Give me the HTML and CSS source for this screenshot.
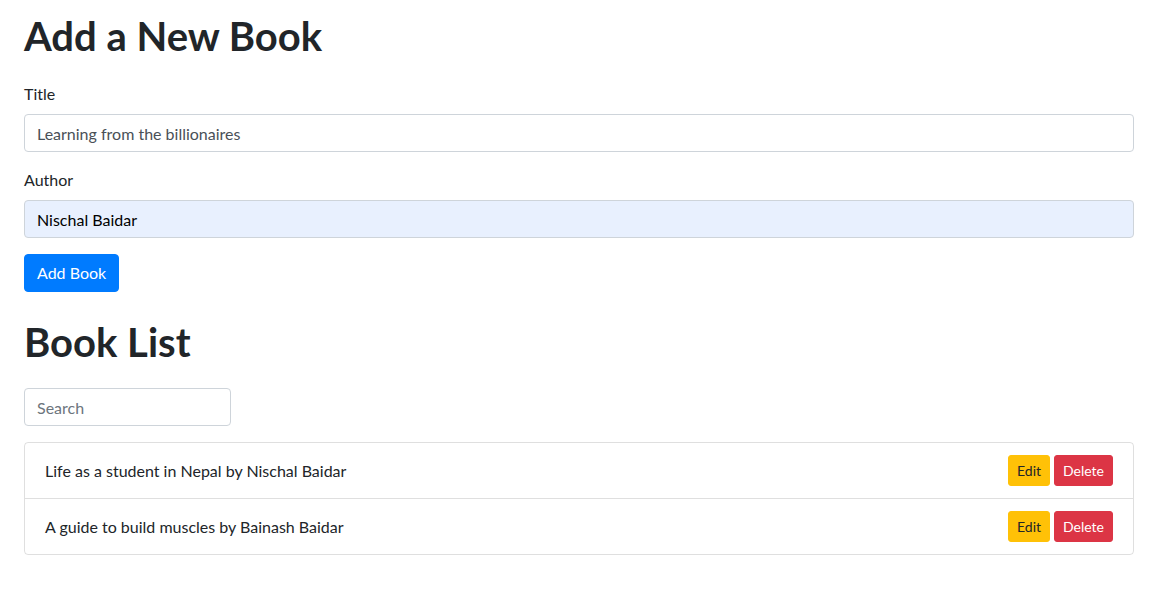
FILE: index.html
```html
<!DOCTYPE html>
<html lang="en">
<head>
<meta charset="utf-8">
<title>Book Manager</title>
<link rel="stylesheet" href="styles.css">
</head>
<body>
<div class="page">
  <h1 class="heading">Add a New Book</h1>
  <form class="book-form">
    <div class="form-group">
      <label class="form-label" for="title">Title</label>
      <input class="form-control" id="title" type="text" value="Learning from the billionaires">
    </div>
    <div class="form-group">
      <label class="form-label" for="author">Author</label>
      <input class="form-control autofilled" id="author" type="text" value="Nischal Baidar">
    </div>
    <button class="btn btn-primary" type="button">Add Book</button>
  </form>

  <h1 class="heading heading-list">Book List</h1>
  <input class="form-control search" type="text" placeholder="Search">

  <ul class="list-group">
    <li class="list-item">
      <span class="item-text">Life as a student in Nepal by Nischal Baidar</span>
      <span class="actions">
        <button class="btn btn-sm btn-warning" type="button">Edit</button>
        <button class="btn btn-sm btn-danger" type="button">Delete</button>
      </span>
    </li>
    <li class="list-item">
      <span class="item-text">A guide to build muscles by Bainash Baidar</span>
      <span class="actions">
        <button class="btn btn-sm btn-warning" type="button">Edit</button>
        <button class="btn btn-sm btn-danger" type="button">Delete</button>
      </span>
    </li>
  </ul>
</div>
</body>
</html>
```

FILE: styles.css
```css
* { box-sizing: border-box; }

html, body {
  margin: 0;
  background: #fff;
}

body {
  font-family: "Segoe UI", Lato, "Open Sans", "Liberation Sans", sans-serif;
  font-size: 16px;
  line-height: 1.5;
  color: #212529;
}

.page {
  width: 1110px;
  margin-left: 24px;
  padding-top: 12px;
}

.heading {
  margin: 0 0 22px;
  font-size: 40px;
  font-weight: 700;
  line-height: 1.2;
}

.heading-list {
  margin-top: 26px;
  margin-bottom: 22px;
}

.form-group {
  margin-bottom: 16px;
}

.form-label {
  display: block;
  margin-bottom: 8px;
}

.form-control {
  display: block;
  width: 100%;
  height: 38px;
  padding: 6px 12px;
  font-family: inherit;
  font-size: 16px;
  line-height: 1.5;
  color: #495057;
  background: #fff;
  border: 1px solid #ced4da;
  border-radius: 4px;
  outline: none;
}

.form-control::placeholder {
  color: #6c757d;
}

.autofilled {
  background: #e8f0fe;
  color: #000;
}

.search {
  width: 207px;
  margin-bottom: 16px;
}

.btn {
  display: inline-block;
  font-family: inherit;
  font-size: 16px;
  line-height: 1.5;
  padding: 6px 12px;
  border: 1px solid transparent;
  border-radius: 4px;
  cursor: pointer;
}

.btn-primary {
  background: #007bff;
  border-color: #007bff;
  color: #fff;
}

.btn-sm {
  font-size: 14px;
  padding: 4px 8px;
  border-radius: 3px;
}

.btn-warning {
  background: #ffc107;
  border-color: #ffc107;
  color: #212529;
}

.btn-danger {
  background: #dc3545;
  border-color: #dc3545;
  color: #fff;
}

.list-group {
  list-style: none;
  margin: 0;
  padding: 0;
  border: 1px solid rgba(0, 0, 0, 0.125);
  border-radius: 4px;
}

.list-item {
  display: flex;
  align-items: center;
  justify-content: space-between;
  padding: 12px 20px;
}

.list-item + .list-item {
  border-top: 1px solid rgba(0, 0, 0, 0.125);
}

.actions {
  display: flex;
  gap: 4px;
}
```
